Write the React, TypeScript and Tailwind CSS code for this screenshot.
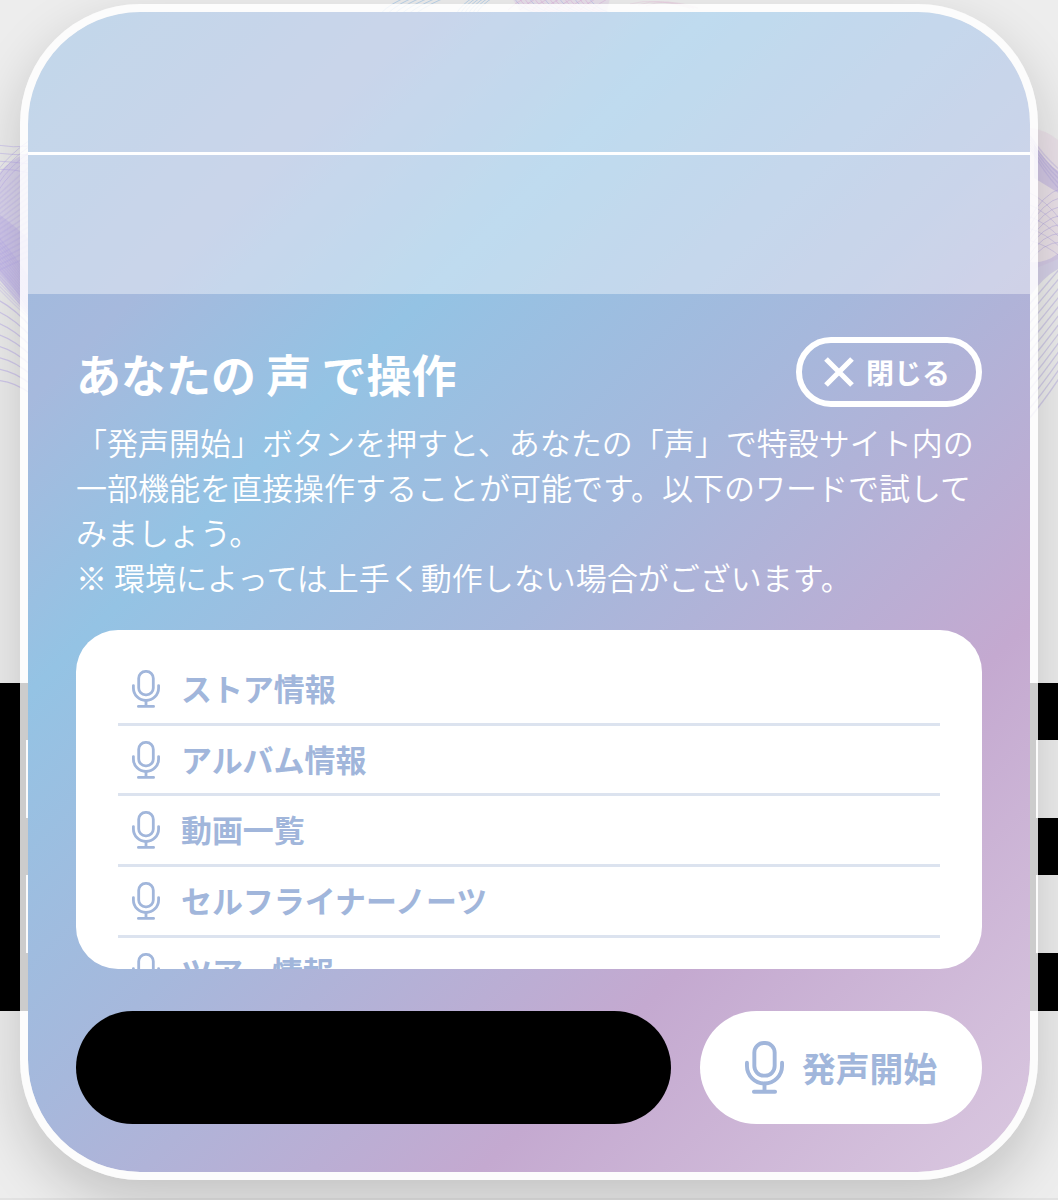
import React from 'react';

const WORDS = ['ストア情報', 'アルバム情報', '動画一覧', 'セルフライナーノーツ', 'ツアー情報'];

const MicIcon: React.FC<{ className?: string }> = ({ className }) => (
  <svg viewBox="0 0 28 38" fill="none" stroke="currentColor" strokeWidth="2.8" strokeLinecap="round" className={className}>
    <rect x="6.7" y="1.4" width="14.6" height="23.4" rx="6.8" />
    <path d="M1.4 15.6v2.4a12.6 12.5 0 0 0 25.2 0v-2.4" />
    <path d="M14 30.6v5.8M6.4 36.4h15.2" />
  </svg>
);

const CloseIcon: React.FC = () => (
  <svg viewBox="0 0 30 30" stroke="currentColor" strokeWidth="5.2" className="h-[30px] w-[30px]">
    <path d="M2 2l26 26M28 2L2 28" />
  </svg>
);

const range = (n: number) => Array.from({ length: n }, (_, i) => i);

// Thin wave lines that show around the edges of the dialog
const Waves: React.FC = () => (
  <svg viewBox="0 0 1058 430" fill="none" className="absolute left-0 top-0 h-[430px] w-full">
    {/* left */}
    <path d="M0 172Q12 158 30 152V318Q14 298 0 280Z" fill="#c3b6ec" fillOpacity="0.45" />
    <path d="M0 215Q14 225 30 240V314Q14 286 0 272Z" fill="#b9abea" fillOpacity="0.35" />
    <g stroke="#b5a6ec">
      {range(4).map(i => (
        <path key={`a${i}`} d={`M-4 ${145 + i * 8}Q14 ${148 + i * 7} 30 ${146 + i * 9}`} strokeOpacity="0.45" />
      ))}
      {range(4).map(i => (
        <path key={`b${i}`} d={`M-2 ${170 + i * 7}Q10 ${154 + i * 6} 30 ${140 + i * 6}`} strokeOpacity="0.45" />
      ))}
      {range(16).map(i => (
        <path key={`c${i}`} d={`M-3 ${196 + i * 5}L30 ${166 + i * 6}`} strokeOpacity="0.25" strokeWidth="1.5" />
      ))}
      {range(16).map(i => (
        <path key={`d${i}`} d={`M-3 ${236 + i * 3.4}Q12 ${252 + i * 3.4} 30 ${280 + i * 2.6}`} strokeOpacity="0.28" strokeWidth="1.3" />
      ))}
      {range(8).map(i => (
        <path key={`e${i}`} d={`M-2 ${300 + i * 11.5}Q14 ${308 + i * 10.5} 32 ${328 + i * 9.5}`} strokeOpacity="0.5" strokeWidth="1.2" />
      ))}
    </g>
    {/* right */}
    <path d="M1030 128Q1048 130 1060 142V258Q1042 266 1030 270Z" fill="#e6cfe2" fillOpacity="0.4" />
    <path d="M1034 144Q1048 166 1060 172V194Q1044 184 1034 178Z" fill="#b5a8e0" fillOpacity="0.45" />
    <path d="M1030 262Q1046 264 1060 252V268Q1044 276 1030 296Z" fill="#b5a8e0" fillOpacity="0.4" />
    <g stroke="#a79bdc">
      {range(5).map(i => (
        <path key={`f${i}`} d={`M1030 ${136 + i * 3}Q1045 ${158 + i * 4} 1060 ${170 + i * 5}`} strokeOpacity="0.3" strokeWidth="1.4" />
      ))}
      {range(7).map(i => (
        <path key={`g${i}`} d={`M1028 ${222 + i * 7}Q1042 ${194 + i * 8} 1062 ${188 + i * 9}`} strokeOpacity="0.4" />
      ))}
      {range(5).map(i => (
        <path key={`h${i}`} d={`M1028 ${192 + i * 12}Q1046 ${200 + i * 11} 1062 ${222 + i * 9}`} strokeOpacity="0.35" />
      ))}
      {range(13).map(i => (
        <path key={`j${i}`} d={`M1028 ${306 + i * 9.5}Q1045 ${286 + i * 9.5} 1062 ${266 + i * 9}`} strokeOpacity="0.4" strokeWidth="1.3" />
      ))}
    </g>
    {/* top */}
    {range(6).map(i => (
      <path key={`k${i}`} d={`M${380 + i * 7} 14Q${392 + i * 8} 2 ${408 + i * 8} -3`} stroke="#8fbce6" strokeOpacity="0.55" />
    ))}
    {range(6).map(i => (
      <path key={`l${i}`} d={`M${456 + i * 4} 14Q${462 + i * 4} 4 ${474 + i * 4} -3`} stroke="#8fbce6" strokeOpacity="0.55" />
    ))}
    <path d="M512 -2H610L606 14H522Z" fill="#dcc0e6" fillOpacity="0.3" />
    {range(16).map(i => (
      <path key={`m${i}`} d={`M${514 + i * 5} -2Q${520 + i * 5} 8 ${535 + i * 5} 13`} stroke={i % 3 ? '#dca6dc' : '#9fb0ea'} strokeOpacity="0.45" />
    ))}
    {range(8).map(i => (
      <path key={`n${i}`} d={`M${508 + i * 12} 10Q${515 + i * 12} 3 ${525 + i * 12} -2`} stroke="#d7a4d8" strokeOpacity="0.4" />
    ))}
    {range(3).map(i => (
      <path key={`o${i}`} d={`M${630 + i * 8} ${4 + i}Q${655 + i * 5} -3 ${690 + i * 4} 8`} stroke="#e3b8d6" strokeOpacity="0.3" />
    ))}
  </svg>
);

const Backdrop: React.FC = () => (
  <div className="absolute inset-0">
    <Waves />
    {/* black columns and bars running behind the dialog */}
    <div className="absolute left-0 top-[683px] h-[328px] w-[26px] bg-black" />
    <div className="absolute left-[1030px] top-[683px] h-[328px] w-[6px] bg-black" />
    <div className="absolute left-0 top-[683px] flex h-[328px] w-full flex-col justify-between">
      <div className="h-[57px] bg-black" />
      <div className="h-[57px] bg-black" />
      <div className="h-[58px] bg-black" />
    </div>
    <div className="absolute bottom-0 left-0 h-[2px] w-full bg-[#e2e2e2]" />
  </div>
);

const App: React.FC = () => {
  return (
    <div className="relative h-[1200px] w-[1058px] overflow-hidden bg-[#ededed] px-5 pt-1 font-['Noto_Sans_CJK_JP',sans-serif]">
      <Backdrop />

      <div className="relative flex h-[1176px] flex-col overflow-hidden rounded-[120px] border-8 border-white/80 bg-[linear-gradient(135deg,#99bcdd_0%,#a6b9dd_18%,#94c3e4_31.5%,#a6b8dc_51%,#c4a9d0_74.5%,#dac8e0_100%)] bg-clip-padding shadow-[0_22px_56px_rgba(0,0,0,0.18)]">
        <div className="h-[140px] shrink-0 bg-white/40" />
        <div className="h-[3px] shrink-0 bg-white" />
        <div className="h-[139px] shrink-0 bg-white/40" />

        <div className="flex flex-col px-12 pt-[43px]">
          <div className="flex h-[70px] items-center justify-between text-white">
            <h1 className="whitespace-nowrap pt-[3px] text-[45px] font-bold leading-[70px]">あなたの 声 で操作</h1>
            <button className="flex h-[70px] w-[186px] items-center justify-center gap-3 rounded-full border-[6px] border-white pr-1">
              <CloseIcon />
              <span className="text-[28px] font-bold leading-none">閉じる</span>
            </button>
          </div>

          <p className="mt-3 whitespace-nowrap text-[31px] font-[350] leading-[45px] text-white">
            「発声開始」ボタンを押すと、あなたの「声」で特設サイト内の<br />
            一部機能を直接操作することが可能です。以下のワードで試して<br />
            みましょう。<br />
            ※ 環境によっては上手く動作しない場合がございます。
          </p>

          <ul className="mt-[31px] h-[339px] overflow-hidden rounded-[42px] bg-white px-[42px] pt-[25px] text-[#a1b6db]">
            {WORDS.map(word => (
              <li key={word} className="flex h-[70.7px] items-center gap-[21px] border-b-[3px] border-[#dce3ef] pl-[14px]">
                <MicIcon className="h-[38px] w-[28px] shrink-0" />
                <span className="pb-px text-[30.94px] font-bold leading-none">{word}</span>
              </li>
            ))}
          </ul>

          <div className="mt-[42px] flex h-[113px] justify-between">
            <div className="w-[595px] rounded-full bg-black" />
            <button className="flex w-[282px] items-center justify-center gap-[18px] rounded-full bg-white text-[#a1b6db]">
              <MicIcon className="h-[53px] w-[39px]" />
              <span className="pt-px text-[33.75px] font-bold leading-none">発声開始</span>
            </button>
          </div>
        </div>
      </div>
    </div>
  );
};

export default App;
